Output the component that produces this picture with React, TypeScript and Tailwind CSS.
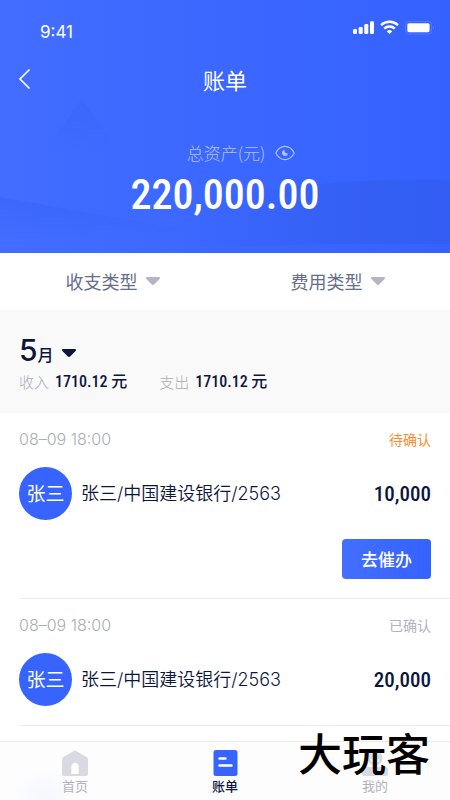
import { useState } from 'react';
import clsx from 'clsx';

type BillStatus = 'pending' | 'confirmed';

interface Bill {
  id: number;
  time: string;
  name: string;
  account: string;
  amount: string;
  status: BillStatus;
}

const bills: Bill[] = [
  { id: 1, time: '08–09 18:00', name: '张三', account: '张三/中国建设银行/2563', amount: '10,000', status: 'pending' },
  { id: 2, time: '08–09 18:00', name: '张三', account: '张三/中国建设银行/2563', amount: '20,000', status: 'confirmed' },
];

const statusLabels: Record<BillStatus, string> = {
  pending: '待确认',
  confirmed: '已确认',
};

const numFont = "font-['Roboto_Condensed','Liberation_Sans_Narrow','Noto_Sans_CJK_SC',sans-serif]";
const textFont = "font-['Inter','Noto_Sans_CJK_SC',sans-serif]";

function Caret({ className }: { className?: string }) {
  return (
    <svg className={clsx('h-2 w-3.5 shrink-0', className)} viewBox="0 0 14 8" fill="currentColor" aria-hidden="true">
      <path d="M1.2 0h11.6c1.1 0 1.5 1.2.8 1.9L8.4 7.3a2 2 0 0 1-2.8 0L.4 1.9C-.3 1.2.1 0 1.2 0Z" />
    </svg>
  );
}

function HeaderArt() {
  return (
    <svg className="absolute inset-0 h-full w-full" viewBox="0 0 450 253" preserveAspectRatio="none" aria-hidden="true">
      <defs>
        <linearGradient id="peak" x1="0" y1="0" x2="0" y2="1">
          <stop offset="0" stopColor="#2f5af0" stopOpacity="0.25" />
          <stop offset="1" stopColor="#2f5af0" stopOpacity="0" />
        </linearGradient>
        <linearGradient id="slope" x1="0" y1="0" x2="0" y2="1">
          <stop offset="0" stopColor="#2f5af0" stopOpacity="0.35" />
          <stop offset="1" stopColor="#2f5af0" stopOpacity="0" />
        </linearGradient>
        <linearGradient id="hill" x1="0" y1="0" x2="1" y2="0">
          <stop offset="0" stopColor="#3059e6" stopOpacity="0" />
          <stop offset="0.7" stopColor="#3059e6" stopOpacity="0.45" />
          <stop offset="1" stopColor="#3059e6" stopOpacity="0.45" />
        </linearGradient>
      </defs>
      <path d="M82 99 L121 153 H43 Z" fill="url(#peak)" />
      <path d="M0 197 L190 231 L0 237 Z" fill="url(#slope)" />
      <path d="M180 204 C270 188 350 177 450 180 V244 H330 L180 248 Z" fill="url(#hill)" />
    </svg>
  );
}

function StatusBar() {
  return (
    <div className="flex items-start justify-between pt-5 pr-4 pl-10">
      <span className="font-['Inter',sans-serif] text-[17px] leading-6">9:41</span>
      <div className="flex items-center gap-1.5">
        <svg className="h-4 w-[21px]" viewBox="0 0 21 16" fill="currentColor" aria-hidden="true">
          <rect x="0" y="9" width="4" height="5" rx="1.2" />
          <rect x="5.7" y="7" width="4" height="7" rx="1.2" />
          <rect x="11.3" y="4" width="4" height="10" rx="1.2" />
          <rect x="17" y="1.3" width="4" height="12.7" rx="1.2" />
        </svg>
        <svg className="h-4 w-[19px]" viewBox="0 0 19 16" fill="none" stroke="currentColor" strokeWidth="2.4" aria-hidden="true">
          <path d="M1 5.2a12.3 12.3 0 0 1 17 0" />
          <path d="M4.2 8.7a7.6 7.6 0 0 1 10.6 0" />
          <path d="M9.5 14 6.8 11.4a3.8 3.8 0 0 1 5.4 0Z" fill="currentColor" stroke="none" />
        </svg>
        <svg className="h-4 w-[29px]" viewBox="0 0 29 16" aria-hidden="true">
          <rect x="0.5" y="1.5" width="26" height="12.5" rx="3.5" fill="none" stroke="white" strokeOpacity="0.14" />
          <rect x="2.3" y="3.2" width="22.3" height="9" rx="1.6" fill="white" />
          <path d="M28 5.8v4q1-.6 1-2t-1-2Z" fill="white" fillOpacity="0.2" />
        </svg>
      </div>
    </div>
  );
}

function EyeIcon() {
  return (
    <svg className="h-4 w-5" viewBox="0 0 20 16" fill="none" stroke="currentColor" strokeWidth="1.2" aria-hidden="true">
      <path d="M.8 8C3 3.6 6.2 1.4 10 1.4S17 3.6 19.2 8C17 12.4 13.8 14.6 10 14.6S3 12.4.8 8Z" />
      <path d="M9.6 5a3 3 0 1 0 3.4 3.4A2.8 2.8 0 0 1 9.6 5Z" fill="currentColor" stroke="none" />
    </svg>
  );
}

function FilterSelect({ label, options }: { label: string; options: string[] }) {
  return (
    <div className="flex items-center justify-center text-[#676e8b]">
      <select aria-label={label} className="h-9 appearance-none bg-transparent text-lg leading-9 outline-none">
        <option value="">{label}</option>
        {options.map((o) => (
          <option key={o}>{o}</option>
        ))}
      </select>
      <Caret className="pointer-events-none ml-2 text-[#b3b5c5]" />
    </div>
  );
}

function BillItem({ bill }: { bill: Bill }) {
  const pending = bill.status === 'pending';
  return (
    <li className="ml-[19px] border-b border-[#ececee] pt-3.5 pr-[19px] pb-[19px]">
      <div className="flex h-6 items-center justify-between">
        <time className="font-['Inter',sans-serif] text-base leading-6 font-light text-[#a9adba]">{bill.time}</time>
        <span className={clsx('text-sm leading-5', pending ? 'text-[#ff8b2c]' : 'text-[#b0b3c0]')}>
          {statusLabels[bill.status]}
        </span>
      </div>
      <div className="mt-4 flex items-center">
        <span className="flex size-[53px] shrink-0 items-center justify-center rounded-full bg-[#3764ff] text-[19px] text-white">
          {bill.name}
        </span>
        <span className={clsx(textFont, 'ml-[9px] flex-1 text-lg font-[350]')}>{bill.account}</span>
        <span className={clsx(numFont, 'text-[21px] leading-6 font-medium')}>{bill.amount}</span>
      </div>
      {pending && (
        <div className="mt-[19px] flex justify-end">
          <button className="h-10 rounded-[4px] bg-linear-to-r from-[#446fff] to-[#3561ff] px-[19px] text-[17px] font-medium text-white">
            去催办
          </button>
        </div>
      )}
    </li>
  );
}

const tabs = [
  {
    key: 'home',
    label: '首页',
    icon: (
      <path
        d="M12.2.7a1.6 1.6 0 0 1 1.6 0L24.6 7A2.8 2.8 0 0 1 26 9.4V24a2 2 0 0 1-2 2H2a2 2 0 0 1-2-2V9.4A2.8 2.8 0 0 1 1.4 7ZM9.3 24h7.4v-7.5a3.7 3.7 0 0 0-7.4 0Z"
        fillRule="evenodd"
      />
    ),
  },
  {
    key: 'bill',
    label: '账单',
    icon: (
      <>
        <rect x="1.5" width="24" height="26" rx="2.5" />
        <path d="M7.5 8.5h6M7.5 15.5h12" stroke="white" strokeWidth="2.4" strokeLinecap="round" />
      </>
    ),
  },
  {
    key: 'mine',
    label: '我的',
    icon: (
      <>
        <circle cx="13" cy="8" r="7.5" />
        <path d="M9 9.5c2 3 6 3 8 0" fill="none" stroke="white" strokeWidth="1.6" />
        <rect y="17" width="26" height="9" rx="2" />
      </>
    ),
  },
];

export default function App() {
  const [active, setActive] = useState('bill');
  const [visible, setVisible] = useState(true);

  return (
    <div className="flex min-h-screen flex-col bg-white font-['Noto_Sans_CJK_SC',sans-serif] text-[#0c163d]">
      <header className="relative bg-linear-to-r from-[#426dff] to-[#3561ff] text-white">
        <HeaderArt />
        <div className="relative pb-8">
          <StatusBar />
          <div className="mt-[19px] grid grid-cols-[1fr_auto_1fr] items-center px-4">
            <button aria-label="返回" className="justify-self-start">
              <svg className="h-6 w-4" viewBox="0 0 16 24" fill="none" stroke="currentColor" strokeWidth="1.7" aria-hidden="true">
                <path d="M13.5 2.5 4 12l9.5 9.5" />
              </svg>
            </button>
            <h1 className="text-[22px] leading-8">账单</h1>
          </div>
          <div className="mt-[46px] flex items-center justify-center gap-2.5 pl-8 text-white/60">
            <span className="text-[17px] leading-6 font-light">总资产(元)</span>
            <button aria-label="显示或隐藏金额" onClick={() => setVisible(!visible)}>
              <EyeIcon />
            </button>
          </div>
          <p className={clsx(numFont, 'mt-1 text-center text-[42px] leading-[52px] font-medium')}>
            {visible ? '220,000.00' : '******'}
          </p>
        </div>
      </header>

      <div className="grid h-[57px] grid-cols-2 pb-0.5">
        <FilterSelect label="收支类型" options={['收入', '支出']} />
        <FilterSelect label="费用类型" options={['房租', '水电']} />
      </div>

      <section className="bg-[#f9f9f9] px-[19px] pt-5 pb-[19px]">
        <button className="flex items-baseline" aria-haspopup="listbox">
          <span className="font-['Inter',sans-serif] text-[30px] leading-10 font-medium">5</span>
          <span className="text-base font-medium">月</span>
          <Caret className="mt-1.5 ml-2 self-center" />
        </button>
        <div className="flex gap-8 leading-6">
          {['收入', '支出'].map((label) => (
            <p key={label} className="flex items-center gap-1.5">
              <span className="text-[15px] font-light text-[#a9adba]">{label}</span>
              <span className={clsx(numFont, 'text-base leading-6 font-medium')}>1710.12 元</span>
            </p>
          ))}
        </div>
      </section>

      <ul>
        {bills.map((bill) => (
          <BillItem key={bill.id} bill={bill} />
        ))}
      </ul>

      <nav className="sticky bottom-0 mt-auto grid grid-cols-3 border-t border-[#ececee] bg-[radial-gradient(circle_at_45px_58px,#f4f7ff,#fdfdfe_32px)] pt-2 pb-1">
        {tabs.map((tab) => (
          <button
            key={tab.key}
            onClick={() => setActive(tab.key)}
            className={clsx(
              'flex flex-col items-center',
              active === tab.key ? 'font-medium text-[#0c163d]' : 'text-[#b0b3c0]'
            )}
          >
            <svg
              className={clsx('size-[26px]', active === tab.key ? 'text-[#3764ff]' : 'text-[#d8dae1]')}
              viewBox="0 0 26 26"
              fill="currentColor"
              aria-hidden="true"
            >
              {tab.icon}
            </svg>
            <span className="text-[13px] leading-5">{tab.label}</span>
          </button>
        ))}
        <span className="pointer-events-none absolute right-5 bottom-7 text-[44px] leading-10 font-medium text-black [text-shadow:0_0_2px_#fffbe0]">
          大玩客
        </span>
      </nav>
    </div>
  );
}
